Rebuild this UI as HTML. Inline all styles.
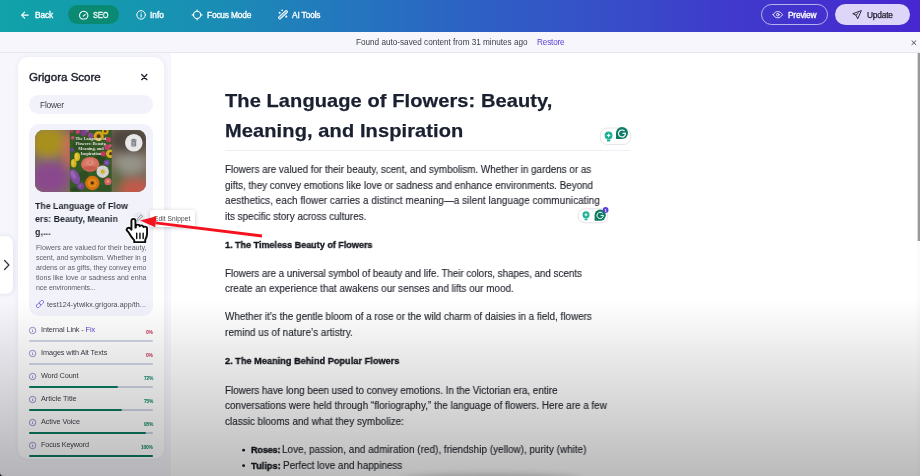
<!DOCTYPE html>
<html lang="en">
<head>
<meta charset="utf-8">
<title>Grigora Editor – The Language of Flowers</title>
<style>
*{box-sizing:border-box;margin:0;padding:0}
html,body{width:920px;height:476px;overflow:hidden}
body{position:relative;background:#f6f6fc;font-family:"Liberation Sans",sans-serif}
.t{position:absolute;white-space:nowrap;z-index:5;will-change:transform}
.abs{position:absolute}
#topbar{position:absolute;left:0;top:0;width:920px;height:32.4px;background:linear-gradient(90deg,#10a3a8 0%,#1499ae 12%,#1b8bb6 25%,#2476be 38%,#2c63c4 50%,#3650c8 65%,#4039cc 80%,#4727d0 100%)}
#seo{position:absolute;left:68.3px;top:5px;width:50.8px;height:19.4px;border-radius:10px;background:#0a8a72}
#preview{position:absolute;left:760.5px;top:4px;width:67.5px;height:21.4px;border-radius:11px;border:1px solid rgba(255,255,255,.62)}
#update{position:absolute;left:834.5px;top:4px;width:75.8px;height:21.4px;border-radius:11px;background:#ddd6f8}
#notice{position:absolute;left:0;top:32.4px;width:920px;height:20.4px;background:#f6f6fc;border-bottom:1px solid #e6e7ef}
#panel{position:absolute;left:18.400px;top:57px;width:145.400px;height:402px;border-radius:10px;background:#fff;box-shadow:0 0 5px rgba(120,120,170,.10)}
#search{position:absolute;left:29px;top:94.7px;width:123.6px;height:19.6px;border-radius:10px;background:#f2f3fa}
#card{position:absolute;left:28.5px;top:123.5px;width:124.5px;height:192px;border-radius:10px;background:#f2f3fa}
#thumb{position:absolute;left:35.3px;top:130.3px;width:111.2px;height:61.7px;border-radius:8.5px;overflow:hidden;background:#6b6558}
#main{position:absolute;left:171.200px;top:52.800px;width:745.800px;height:424px;background:#fff}
#hr{position:absolute;left:225px;top:150px;width:406px;height:1px;background:#f0f0f4}
#tab{position:absolute;left:-4px;top:236px;width:17.2px;height:58px;border-radius:7px;background:#fff;box-shadow:0 0 5px rgba(100,100,150,.18)}
.bar{position:absolute;left:28.500px;width:124.200px;height:2.200px;border-radius:1.100px;background:#cfd5e4;z-index:4}
.bar i{display:block;height:100%;border-radius:1px;background:#0b7c62}
.info{position:absolute;left:28px;width:9px;height:9px;z-index:4}
#tip{position:absolute;left:149.8px;top:210.3px;width:45.6px;height:16.3px;border-radius:2.5px;background:#fff;box-shadow:0 1px 4px rgba(0,0,0,.22);z-index:4}
#scroll{position:absolute;left:917px;top:52.8px;width:3px;height:424px;background:#fbfbfc}
#scroll i{position:absolute;left:.4px;top:0;width:2.6px;height:188px;background:linear-gradient(90deg,#dcdcde 0,#dcdcde 35%,#98989c 45%,#98989c 100%)}
#vig{position:absolute;left:0;top:0;width:920px;height:476px;z-index:20;pointer-events:none;background:linear-gradient(180deg,rgba(0,0,0,0) 63%,rgba(0,0,0,.265) 100%)}
#blob{position:absolute;left:398px;top:473.5px;width:184px;height:12px;border-radius:50%;background:rgba(0,0,0,.2);filter:blur(3.5px);z-index:21}
svg{position:absolute;overflow:visible}
</style>
</head>
<body>
<div id="topbar"></div>
<div id="seo"></div>
<div id="preview"></div>
<div id="update"></div>
<div id="notice"></div>
<div id="main"></div>
<div id="scroll"><i></i></div>
<div id="hr"></div>
<div id="panel"></div>
<div id="search"></div>
<div id="card"></div>
<div id="tab"></div>
<div id="thumb">
<svg style="left:0;top:0" width="111.2" height="61.7" viewBox="35.3 130.3 111.2 61.7">
<defs>
<filter id="bl" x="-20%" y="-20%" width="140%" height="140%"><feGaussianBlur stdDeviation="5"/></filter>
<filter id="b1" x="-20%" y="-20%" width="140%" height="140%"><feGaussianBlur stdDeviation=".7"/></filter>
<clipPath id="cp"><rect x="70.1" y="130.3" width="41.9" height="61.7"/></clipPath>
</defs>
<g filter="url(#bl)">
<rect x="20" y="115" width="140" height="95" fill="#7a6a58"/>
<ellipse cx="48" cy="142" rx="18" ry="16" fill="#a8901c"/>
<ellipse cx="50" cy="178" rx="20" ry="17" fill="#8a4a8c"/>
<ellipse cx="70" cy="150" rx="7" ry="18" fill="#c46a58"/>
<ellipse cx="130" cy="140" rx="22" ry="14" fill="#4f463f"/>
<ellipse cx="130" cy="164" rx="16" ry="10" fill="#96948a"/>
<ellipse cx="136" cy="190" rx="16" ry="10" fill="#c4584a"/>
<ellipse cx="116" cy="180" rx="6" ry="14" fill="#5a6a3c"/>
</g>
<g clip-path="url(#cp)"><g filter="url(#b1)">
<rect x="68" y="128" width="46" height="66" fill="#38622a"/>
<ellipse cx="82" cy="146" rx="9" ry="7" fill="#2f5624"/><ellipse cx="100" cy="160" rx="6" ry="5" fill="#2c5020"/><ellipse cx="84" cy="176" rx="5" ry="5" fill="#2e5422"/><ellipse cx="104" cy="189" rx="7" ry="4" fill="#335a26"/><ellipse cx="76" cy="190" rx="5" ry="3" fill="#2c4e20"/>
<circle cx="84" cy="133" r="3.2" fill="#8a3f9a"/><circle cx="91" cy="135.5" r="2.8" fill="#9a4aa0"/><circle cx="87.500" cy="131" r="1.800" fill="#b05ab4"/>
<circle cx="78" cy="132" r="2.2" fill="#d8407a"/><circle cx="73" cy="138" r="1.800" fill="#e0508a"/><circle cx="72" cy="131.500" r="1.600" fill="#c83a70"/>
<circle cx="99" cy="136.500" r="5" fill="#f2c21a"/><circle cx="99" cy="136.500" r="3.200" fill="#e8a814"/><circle cx="99" cy="136.500" r="1.900" fill="#5a3a14"/>
<circle cx="105.500" cy="131.500" r="3.400" fill="#f0b818"/><circle cx="105.500" cy="131.500" r="1.300" fill="#6a4214"/>
<circle cx="109" cy="140" r="2.600" fill="#d83a6a"/><circle cx="107.500" cy="147.500" r="2.800" fill="#d8407a"/><circle cx="103.500" cy="154" r="2.600" fill="#d83a6a"/><circle cx="110.500" cy="146" r="1.700" fill="#e05a80"/>
<circle cx="110.500" cy="154" r="4.200" fill="#f0c41c"/><circle cx="111" cy="154" r="1.600" fill="#5a3a14"/>
<ellipse cx="77.400" cy="157" rx="2.900" ry="4.200" fill="#f0d21c"/><ellipse cx="76.600" cy="156.500" rx="1.200" ry="3" fill="#f8e458"/><ellipse cx="74" cy="163.500" rx="2.900" ry="4.200" fill="#ecc818"/><ellipse cx="73.400" cy="163" rx="1.100" ry="3" fill="#f6de50"/>
<circle cx="107" cy="163" r="3" fill="#7a4ab0"/><circle cx="107" cy="163" r="1.200" fill="#9a6ad0"/>
<circle cx="72.500" cy="150" r="2" fill="#6a4aa8"/>
<ellipse cx="90.500" cy="164.600" rx="9.200" ry="7.400" fill="#ee7a68"/><ellipse cx="90" cy="163.300" rx="6" ry="4.400" fill="#f48a76"/><ellipse cx="90.300" cy="163" rx="3" ry="2.200" fill="#f8a08c"/><ellipse cx="90.500" cy="168.600" rx="6.500" ry="2.400" fill="#e06656"/><ellipse cx="90.200" cy="162.800" rx="1.300" ry="1" fill="#e87462"/>
<circle cx="103" cy="172" r="6.200" fill="#f2f0ee"/><g stroke="#cfcdcb" stroke-width=".5"><path d="M103 166v12M97 172h12M98.800 167.800l8.400 8.400M107.200 167.800l-8.400 8.400"/></g><circle cx="103" cy="172" r="2.100" fill="#f0c820"/>
<ellipse cx="75" cy="177" rx="4.600" ry="8" fill="#8c54b4" transform="rotate(-25 75 177)"/><ellipse cx="74.500" cy="175" rx="2.200" ry="4.500" fill="#a66cc8" transform="rotate(-25 75 177)"/><ellipse cx="81" cy="186.500" rx="3.600" ry="3.600" fill="#8448a8"/><circle cx="80.500" cy="186" r="1.500" fill="#9c62bc"/>
<circle cx="92.600" cy="183.300" r="7.200" fill="#ee7c10"/><circle cx="92.600" cy="183.300" r="4.600" fill="#f89a20"/><circle cx="92.600" cy="183.300" r="2.400" fill="#e0700c"/><circle cx="92.600" cy="183.300" r="1.300" fill="#4a2208"/>
<circle cx="108.200" cy="181.700" r="3.600" fill="#f06a7c"/><circle cx="108.200" cy="181.700" r="1.300" fill="#f8c050"/>
<rect x="68" y="128" width="46" height="66" fill="rgba(40,40,30,.13)"/>
</g></g>
</svg>
</div>
<!-- trash button -->
<svg style="left:124.6px;top:134.4px;z-index:6" width="17.6" height="17.6" viewBox="0 0 17.6 17.6">
<circle cx="8.8" cy="8.8" r="8.8" fill="#e9e8e8"/>
<path d="M5.9 6.2h5.8M7.6 6.2v-.9h2.4v.9" fill="none" stroke="#6a6c72" stroke-width=".9"/>
<rect x="6.4" y="6.9" width="4.8" height="5.6" rx=".8" fill="#777a80"/>
<path d="M7.4 8.4h2.8M7.4 9.8h2.8M7.4 11.2h2.8" stroke="#e9e8e8" stroke-width=".55"/>
</svg>
<!-- top bar icons -->
<svg style="left:0;top:0;z-index:6" width="920" height="33" viewBox="0 0 920 33" fill="none" stroke="#fff" stroke-width="1" stroke-linecap="round" stroke-linejoin="round">
<path d="M28.2 15.1h-6.6M24.6 12.1l-3 3 3 3" stroke-width="1.15"/>
<path d="M81.100 18.700a4.200 4.200 0 1 1 5.200 0q-.3.250-.7.250h-3.800q-.4 0-.7-.250zM83.300 16.100l2-1.700" stroke-width="1.050"/>
<circle cx="141.100" cy="14.900" r="4.300" stroke-width="1"/><path d="M141.100 14.500v2.500M141.100 12.700v.2" stroke-width="1.050"/>
<circle cx="197.100" cy="14.900" r="3.600" stroke-width="1.150"/><path d="M197.100 10v1.200M197.100 18.600v1.200M192.200 14.900h1.200M200.800 14.900h1.200" stroke-width="1.150"/>
<rect x="277.400" y="13.500" width="11.200" height="2.400" rx="1.200" transform="rotate(-42 283 14.700)" stroke-width=".950" fill="rgba(255,255,255,.4)"/><circle cx="279.600" cy="12.800" r="1" fill="#fff" stroke="none"/><circle cx="282.100" cy="10.400" r=".8" fill="#fff" stroke="none"/><circle cx="286.300" cy="16.600" r="1.050" fill="#fff" stroke="none"/>
<path d="M773.100 14.700c1.300-2.100 2.900-3.100 4.700-3.100s3.400 1 4.700 3.100c-1.300 2.100-2.900 3.100-4.700 3.100s-3.400-1-4.700-3.100z" stroke-width=".85"/><circle cx="777.8" cy="14.7" r="1.3" stroke-width=".85"/>
<path d="M861 10.700l-8.200 3 3.200 1.500 1.500 3.300zM856 15.200l2.400-2.200" stroke="#1d1d2b" stroke-width=".9"/>
</svg>
<!-- notice close, panel close, tab chevron -->
<svg style="left:0;top:0;z-index:6" width="920" height="476" viewBox="0 0 920 476" fill="none" stroke-linecap="round" stroke-linejoin="round">
<path d="M911.900 40.700l4 4M915.900 40.700l-4 4" stroke="#3c3f4a" stroke-width=".9"/>
<path d="M141.700 74.500l5.200 5.200M146.900 74.500l-5.200 5.200" stroke="#1b1f2a" stroke-width="1.25"/>
<path d="M4.600 260.500l4.300 4.500-4.300 4.500" stroke="#33363f" stroke-width="1.25"/>
<!-- link icon -->
<g stroke="#9079e2" stroke-width=".9" fill="none"><rect x="36.100" y="303.900" width="4.800" height="3.300" rx="1.650" transform="rotate(-45 38.500 305.550)"/><rect x="39.100" y="300.900" width="4.800" height="3.300" rx="1.650" transform="rotate(-45 41.500 302.550)"/></g>
<!-- pencil -->
<circle cx="139.200" cy="217.700" r="5.600" fill="#e7e8ee" stroke="none"/>
<path d="M136.800 220.600l.5-1.900 3.900-3.900 1.400 1.400-3.900 3.900z" stroke="#7a7c84" stroke-width=".75"/>
</svg>
<div id="tip"></div>
<div class="bar" style="top:339.5px"><i style="width:0%"></i></div>
<svg class="info" style="top:325.9px" viewBox="0 0 9 9"><circle cx="4.6" cy="4.5" r="3.2" fill="none" stroke="#7d6cc4" stroke-width=".75"/><path d="M4.6 4.1v2M4.6 2.9v.6" stroke="#7d6cc4" stroke-width=".75"/></svg>
<div class="bar" style="top:362.5px"><i style="width:0%"></i></div>
<svg class="info" style="top:348.9px" viewBox="0 0 9 9"><circle cx="4.6" cy="4.5" r="3.2" fill="none" stroke="#7d6cc4" stroke-width=".75"/><path d="M4.6 4.1v2M4.6 2.9v.6" stroke="#7d6cc4" stroke-width=".75"/></svg>
<div class="bar" style="top:385.5px"><i style="width:72%"></i></div>
<svg class="info" style="top:371.9px" viewBox="0 0 9 9"><circle cx="4.6" cy="4.5" r="3.2" fill="none" stroke="#7d6cc4" stroke-width=".75"/><path d="M4.6 4.1v2M4.6 2.9v.6" stroke="#7d6cc4" stroke-width=".75"/></svg>
<div class="bar" style="top:408.5px"><i style="width:75%"></i></div>
<svg class="info" style="top:394.9px" viewBox="0 0 9 9"><circle cx="4.6" cy="4.5" r="3.2" fill="none" stroke="#7d6cc4" stroke-width=".75"/><path d="M4.6 4.1v2M4.6 2.9v.6" stroke="#7d6cc4" stroke-width=".75"/></svg>
<div class="bar" style="top:431.5px"><i style="width:95%"></i></div>
<svg class="info" style="top:417.9px" viewBox="0 0 9 9"><circle cx="4.6" cy="4.5" r="3.2" fill="none" stroke="#7d6cc4" stroke-width=".75"/><path d="M4.6 4.1v2M4.6 2.9v.6" stroke="#7d6cc4" stroke-width=".75"/></svg>
<div class="bar" style="top:454.5px"><i style="width:100%"></i></div>
<svg class="info" style="top:440.9px" viewBox="0 0 9 9"><circle cx="4.6" cy="4.5" r="3.2" fill="none" stroke="#7d6cc4" stroke-width=".75"/><path d="M4.6 4.1v2M4.6 2.9v.6" stroke="#7d6cc4" stroke-width=".75"/></svg>

<!-- grammarly widgets -->
<svg style="left:0;top:0;z-index:6" width="920" height="476" viewBox="0 0 920 476">
<g id="gw1">
<rect x="600.200" y="128" width="30.600" height="16.600" rx="7.500" fill="#fff" stroke="#dcdde2" stroke-width=".8"/>
<circle cx="608.600" cy="135.500" r="3.900" fill="#1db394"/><rect x="606.900" y="139.600" width="3.400" height="1.900" rx=".6" fill="#1db394"/>
<path d="M608.600 133.800v3.400M606.900 135.500h3.400" stroke="#fff" stroke-width="1.100"/>
<path d="M616 133a6 6 0 1 1 6 6h-6z" fill="#0e7c64"/>
<path d="M624.600 131.100a3.500 3.500 0 1 0 .9 2.300h-3" fill="none" stroke="#fff" stroke-width="1.100"/>
</g>
<g id="gw2">
<rect x="578.200" y="208.800" width="29.400" height="14" rx="6.500" fill="#fff" stroke="#dcdde2" stroke-width=".8"/>
<circle cx="586" cy="214.800" r="3.500" fill="#1db394"/><rect x="584.500" y="218.500" width="3" height="1.700" rx=".5" fill="#1db394"/>
<path d="M586 213.300v3M584.500 214.800h3" stroke="#fff" stroke-width="1"/>
<path d="M594.600 215.200a5.600 5.600 0 1 1 5.600 5.600h-5.600z" fill="#0e7c64"/>
<path d="M602.600 213.300a3.200 3.200 0 1 0 .8 2.100h-2.800" fill="none" stroke="#fff" stroke-width="1"/>
<circle cx="605.600" cy="210" r="2.900" fill="#5a3fd6"/>
<text x="605.600" y="211.600" font-family="Liberation Sans, sans-serif" font-size="4.200" font-weight="700" fill="#fff" text-anchor="middle">1</text>
</g>
</svg>
<header>
<div class="t" style="top:9.91px;font-size:8.4px;line-height:10.92px;color:#fff;left:34.8px;letter-spacing:-0.181px;-webkit-text-stroke:.32px #fff;">Back</div>
<div class="t" style="top:10.00px;font-size:8.4px;line-height:10.92px;color:#fff;left:93px;letter-spacing:-0.063px;transform-origin:0 0;transform:scaleX(0.88);-webkit-text-stroke:.32px #fff;">SEO</div>
<div class="t" style="top:9.91px;font-size:8.4px;line-height:10.92px;color:#fff;left:150.3px;letter-spacing:0.004px;-webkit-text-stroke:.32px #fff;">Info</div>
<div class="t" style="top:9.91px;font-size:8.4px;line-height:10.92px;color:#fff;left:206.6px;letter-spacing:-0.199px;-webkit-text-stroke:.32px #fff;">Focus Mode</div>
<div class="t" style="top:9.91px;font-size:8.4px;line-height:10.92px;color:#fff;left:291.6px;letter-spacing:-0.155px;-webkit-text-stroke:.32px #fff;">AI Tools</div>
<div class="t" style="top:9.91px;font-size:8.4px;line-height:10.92px;color:#fff;left:788px;letter-spacing:-0.214px;-webkit-text-stroke:.32px #fff;">Preview</div>
<div class="t" style="top:9.91px;font-size:8.4px;line-height:10.92px;color:#1d1d2b;left:867.2px;letter-spacing:-0.203px;-webkit-text-stroke:.25px #1d1d2b;">Update</div>
</header>
<section>
<div class="t" style="top:38.30px;font-size:8.2px;line-height:10.66px;color:#3c3f4a;left:356px;letter-spacing:-0.012px;">Found auto-saved content from 31 minutes ago</div>
<div class="t" style="top:38.30px;font-size:8.2px;line-height:10.66px;color:#5a3fd6;left:536.5px;letter-spacing:-0.167px;">Restore</div>
</section>
<aside>
<div class="t" style="top:69.00px;font-size:11.6px;line-height:15.08px;color:#1b1f2a;left:29px;letter-spacing:-0.029px;-webkit-text-stroke:.4px #1b1f2a;">Grigora Score</div>
<div class="t" style="top:100.31px;font-size:8.4px;line-height:10.92px;color:#3a3d46;left:39.7px;letter-spacing:-0.207px;">Flower</div>
<div class="t" style="top:200.62px;font-size:9.1px;line-height:11.83px;color:#1b1f2a;left:35.0px;font-weight:700;letter-spacing:0.044px;transform-origin:0 0;transform:scaleX(0.96);">The Language of Flow</div>
<div class="t" style="top:214.12px;font-size:9.1px;line-height:11.83px;color:#1b1f2a;left:35.0px;font-weight:700;letter-spacing:0.053px;transform-origin:0 0;transform:scaleX(0.96);">ers: Beauty, Meanin</div>
<div class="t" style="top:227.21px;font-size:9.1px;line-height:11.83px;color:#1b1f2a;left:35.0px;font-weight:700;letter-spacing:0.157px;transform-origin:0 0;transform:scaleX(0.96);">g,...</div>
<div class="t" style="top:244.41px;font-size:7.1px;line-height:9.23px;color:#5e616a;left:35.5px;letter-spacing:-0.005px;">Flowers are valued for their beauty,</div>
<div class="t" style="top:254.41px;font-size:7.1px;line-height:9.23px;color:#5e616a;left:35.5px;letter-spacing:-0.055px;">scent, and symbolism. Whether in g</div>
<div class="t" style="top:264.31px;font-size:7.1px;line-height:9.23px;color:#5e616a;left:35.5px;letter-spacing:-0.042px;">ardens or as gifts, they convey emo</div>
<div class="t" style="top:274.22px;font-size:7.1px;line-height:9.23px;color:#5e616a;left:35.5px;letter-spacing:-0.009px;">tions like love or sadness and enha</div>
<div class="t" style="top:284.11px;font-size:7.1px;line-height:9.23px;color:#5e616a;left:35.5px;letter-spacing:-0.127px;">nce environments...</div>
<div class="t" style="top:300.81px;font-size:7.1px;line-height:9.23px;color:#4a4d57;left:47px;letter-spacing:0.074px;">test124-ytwikx.grigora.app/th<span style="color:#6a4fd8">...</span></div>
<div class="t" style="top:325.20px;font-size:7.3px;line-height:9.49px;color:#3e414a;left:41px;letter-spacing:-0.104px;">Internal Link - <span style="color:#5a3fd6">Fix</span></div>
<div class="t" style="top:329.60px;font-size:4.9px;line-height:6.37px;color:#c02a4c;left:146px;font-weight:700;letter-spacing:-0.189px;">0%</div>
<div class="t" style="top:348.20px;font-size:7.3px;line-height:9.49px;color:#3e414a;left:41px;letter-spacing:-0.086px;">Images with Alt Texts</div>
<div class="t" style="top:352.60px;font-size:4.9px;line-height:6.37px;color:#c02a4c;left:146px;font-weight:700;letter-spacing:-0.189px;">0%</div>
<div class="t" style="top:371.20px;font-size:7.3px;line-height:9.49px;color:#3e414a;left:41px;letter-spacing:-0.141px;">Word Count</div>
<div class="t" style="top:375.60px;font-size:4.9px;line-height:6.37px;color:#0a8266;left:143.5px;font-weight:700;letter-spacing:-0.199px;">72%</div>
<div class="t" style="top:394.20px;font-size:7.3px;line-height:9.49px;color:#3e414a;left:41px;letter-spacing:-0.007px;">Article Title</div>
<div class="t" style="top:398.60px;font-size:4.9px;line-height:6.37px;color:#0a8266;left:143.5px;font-weight:700;letter-spacing:-0.199px;">75%</div>
<div class="t" style="top:417.20px;font-size:7.3px;line-height:9.49px;color:#3e414a;left:41px;letter-spacing:-0.071px;">Active Voice</div>
<div class="t" style="top:421.60px;font-size:4.9px;line-height:6.37px;color:#0a8266;left:143.5px;font-weight:700;letter-spacing:-0.199px;">95%</div>
<div class="t" style="top:440.20px;font-size:7.3px;line-height:9.49px;color:#3e414a;left:41px;letter-spacing:-0.192px;">Focus Keyword</div>
<div class="t" style="top:444.60px;font-size:4.9px;line-height:6.37px;color:#0a8266;left:141px;font-weight:700;letter-spacing:-0.204px;">100%</div>
<div class="t" style="top:214.91px;font-size:6.6px;line-height:8.58px;color:#4a4a4a;left:154px;letter-spacing:0.078px;">Edit Snippet</div>
<div class="t" style="top:135.60px;font-size:4.3px;line-height:5.59px;color:rgba(255,255,250,.88);font-weight:700;font-family:'Liberation Serif', serif;left:70px;width:42px;text-align:center;text-shadow:0 0 1px rgba(0,0,0,.35);">The Language of</div>
<div class="t" style="top:140.66px;font-size:4.3px;line-height:5.59px;color:rgba(255,255,250,.88);font-weight:700;font-family:'Liberation Serif', serif;left:70px;width:42px;text-align:center;text-shadow:0 0 1px rgba(0,0,0,.35);">Flowers: Beauty,</div>
<div class="t" style="top:145.71px;font-size:4.3px;line-height:5.59px;color:rgba(255,255,250,.88);font-weight:700;font-family:'Liberation Serif', serif;left:70px;width:42px;text-align:center;text-shadow:0 0 1px rgba(0,0,0,.35);">Meaning, and</div>
<div class="t" style="top:150.75px;font-size:4.3px;line-height:5.59px;color:rgba(255,255,250,.88);font-weight:700;font-family:'Liberation Serif', serif;left:70px;width:42px;text-align:center;text-shadow:0 0 1px rgba(0,0,0,.35);">Inspiration</div>
</aside>
<main>
<div class="t" style="top:89.00px;font-size:19.0px;line-height:24.7px;color:#1a2030;left:224.6px;font-weight:700;letter-spacing:0.076px;transform-origin:0 0;transform:scaleX(1.055);-webkit-text-stroke:.25px #1a2030;">The Language of Flowers: Beauty,</div>
<div class="t" style="top:119.00px;font-size:19.0px;line-height:24.7px;color:#1a2030;left:224.6px;font-weight:700;letter-spacing:0.091px;transform-origin:0 0;transform:scaleX(1.055);-webkit-text-stroke:.25px #1a2030;">Meaning, and Inspiration</div>
<div class="t" style="top:163.40px;font-size:10.0px;line-height:13.0px;color:#23262e;left:224.6px;letter-spacing:-0.012px;transform-origin:0 0;transform:scaleX(0.985);-webkit-text-stroke:.12px #23262e;">Flowers are valued for their beauty, scent, and symbolism. Whether in gardens or as</div>
<div class="t" style="top:178.90px;font-size:10.0px;line-height:13.0px;color:#23262e;left:224.6px;letter-spacing:-0.007px;transform-origin:0 0;transform:scaleX(0.985);-webkit-text-stroke:.12px #23262e;">gifts, they convey emotions like love or sadness and enhance environments. Beyond</div>
<div class="t" style="top:194.40px;font-size:10.0px;line-height:13.0px;color:#23262e;left:224.6px;letter-spacing:0.086px;transform-origin:0 0;transform:scaleX(0.985);-webkit-text-stroke:.12px #23262e;">aesthetics, each flower carries a distinct meaning—a silent language communicating</div>
<div class="t" style="top:209.90px;font-size:10.0px;line-height:13.0px;color:#23262e;left:224.6px;letter-spacing:0.005px;transform-origin:0 0;transform:scaleX(0.985);-webkit-text-stroke:.12px #23262e;">its specific story across cultures.</div>
<div class="t" style="top:238.92px;font-size:9.4px;line-height:12.22px;color:#15181f;left:224.6px;font-weight:700;letter-spacing:-0.032px;transform-origin:0 0;transform:scaleX(0.97);-webkit-text-stroke:.35px #15181f;">1. The Timeless Beauty of Flowers</div>
<div class="t" style="top:266.70px;font-size:10.0px;line-height:13.0px;color:#23262e;left:224.6px;letter-spacing:-0.048px;transform-origin:0 0;transform:scaleX(0.985);-webkit-text-stroke:.12px #23262e;">Flowers are a universal symbol of beauty and life. Their colors, shapes, and scents</div>
<div class="t" style="top:282.11px;font-size:10.0px;line-height:13.0px;color:#23262e;left:224.6px;letter-spacing:0.020px;transform-origin:0 0;transform:scaleX(0.985);-webkit-text-stroke:.12px #23262e;">create an experience that awakens our senses and lifts our mood.</div>
<div class="t" style="top:310.20px;font-size:10.0px;line-height:13.0px;color:#23262e;left:224.6px;letter-spacing:0.001px;transform-origin:0 0;transform:scaleX(0.985);-webkit-text-stroke:.12px #23262e;">Whether it’s the gentle bloom of a rose or the wild charm of daisies in a field, flowers</div>
<div class="t" style="top:325.81px;font-size:10.0px;line-height:13.0px;color:#23262e;left:224.6px;letter-spacing:0.059px;transform-origin:0 0;transform:scaleX(0.985);-webkit-text-stroke:.12px #23262e;">remind us of nature’s artistry.</div>
<div class="t" style="top:355.31px;font-size:9.4px;line-height:12.22px;color:#15181f;left:224.6px;font-weight:700;letter-spacing:0.058px;transform-origin:0 0;transform:scaleX(0.97);-webkit-text-stroke:.35px #15181f;">2. The Meaning Behind Popular Flowers</div>
<div class="t" style="top:383.61px;font-size:10.0px;line-height:13.0px;color:#23262e;left:224.6px;letter-spacing:-0.026px;transform-origin:0 0;transform:scaleX(0.985);-webkit-text-stroke:.12px #23262e;">Flowers have long been used to convey emotions. In the Victorian era, entire</div>
<div class="t" style="top:399.20px;font-size:10.0px;line-height:13.0px;color:#23262e;left:224.6px;letter-spacing:0.024px;transform-origin:0 0;transform:scaleX(0.985);-webkit-text-stroke:.12px #23262e;">conversations were held through “floriography,” the language of flowers. Here are a few</div>
<div class="t" style="top:414.81px;font-size:10.0px;line-height:13.0px;color:#23262e;left:224.6px;letter-spacing:0.040px;transform-origin:0 0;transform:scaleX(0.985);-webkit-text-stroke:.12px #23262e;">classic blooms and what they symbolize:</div>
<div class="t" style="top:444.11px;font-size:9.4px;line-height:12.22px;color:#15181f;left:250.6px;font-weight:700;letter-spacing:-0.159px;transform-origin:0 0;transform:scaleX(0.97);-webkit-text-stroke:.35px #15181f;">Roses:</div>
<div class="t" style="top:443.11px;font-size:10.0px;line-height:13.0px;color:#23262e;left:282.1px;letter-spacing:0.039px;transform-origin:0 0;transform:scaleX(0.985);-webkit-text-stroke:.12px #23262e;">Love, passion, and admiration (red), friendship (yellow), purity (white)</div>
<div class="t" style="top:459.61px;font-size:9.4px;line-height:12.22px;color:#15181f;left:250.6px;font-weight:700;letter-spacing:0.099px;transform-origin:0 0;transform:scaleX(0.97);-webkit-text-stroke:.35px #15181f;">Tulips:</div>
<div class="t" style="top:458.61px;font-size:10.0px;line-height:13.0px;color:#23262e;left:282.6px;letter-spacing:0.018px;transform-origin:0 0;transform:scaleX(0.985);-webkit-text-stroke:.12px #23262e;">Perfect love and happiness</div>
</main>
<!-- bullets -->
<svg style="left:0;top:0;z-index:6" width="920" height="476" viewBox="0 0 920 476">
<circle cx="243.600" cy="450.200" r="1.400" fill="#15181f"/><circle cx="243.600" cy="465.700" r="1.400" fill="#15181f"/>
<!-- red arrow -->
<path d="M155.500 222.900L262 236" stroke="#f5121f" stroke-width="2.800" fill="none"/>
<path d="M140.200 220.400L156.400 216.200L155.200 227.200z" fill="#f5121f"/>
<!-- hand cursor -->
<g transform="translate(125.900 217.600) scale(1.150 1.070)">
<path d="M6.500 1.200c1.100 0 1.800.8 1.800 1.900v6.300l.3-.1v-1c0-1 .8-1.700 1.700-1.700s1.600.6 1.700 1.500c.3-.5.800-.8 1.500-.8 1 0 1.700.7 1.800 1.600.3-.3.700-.5 1.300-.5 1 0 1.800.8 1.800 1.800v5c0 2.800-.9 4.300-1.600 5.600v2.200h-9.600v-2c-1.300-1.200-2.500-2.900-3.700-5.200-.7-1.300-1.500-2.400-2.300-3.300-.7-.8-.7-1.800 0-2.500.8-.7 1.900-.6 2.700.2l.9 1.100V3.100c0-1.100.7-1.900 1.700-1.900z" fill="none" stroke="rgba(255,255,255,.85)" stroke-width="3.200" stroke-linejoin="round"/>
<path d="M6.500 1.200c1.100 0 1.800.8 1.800 1.900v6.300l.3-.1v-1c0-1 .8-1.700 1.700-1.700s1.600.6 1.700 1.500c.3-.5.800-.8 1.500-.8 1 0 1.700.7 1.800 1.600.3-.3.700-.5 1.300-.5 1 0 1.800.8 1.800 1.800v5c0 2.800-.9 4.300-1.600 5.600v2.200h-9.600v-2c-1.300-1.200-2.500-2.900-3.700-5.200-.7-1.300-1.500-2.400-2.300-3.300-.7-.8-.7-1.800 0-2.500.8-.7 1.900-.6 2.700.2l.9 1.100V3.100c0-1.100.7-1.900 1.700-1.900z" fill="#fff" stroke="#0c0c0c" stroke-width="1.700" stroke-linejoin="round"/>
<path d="M9.400 14.500v5M12.200 14.500v5M15 14.500v5" stroke="#0c0c0c" stroke-width="1.250" stroke-linecap="round"/>
</g>
<!-- black rounded corner bottom-left -->
<path d="M0 472.500v3.500h3.500a3.500 3.500 0 0 1-3.500-3.500z" fill="#0a0a0a"/>
</svg>
<div id="vig"></div>
<div id="blob"></div>
</body>
</html>
